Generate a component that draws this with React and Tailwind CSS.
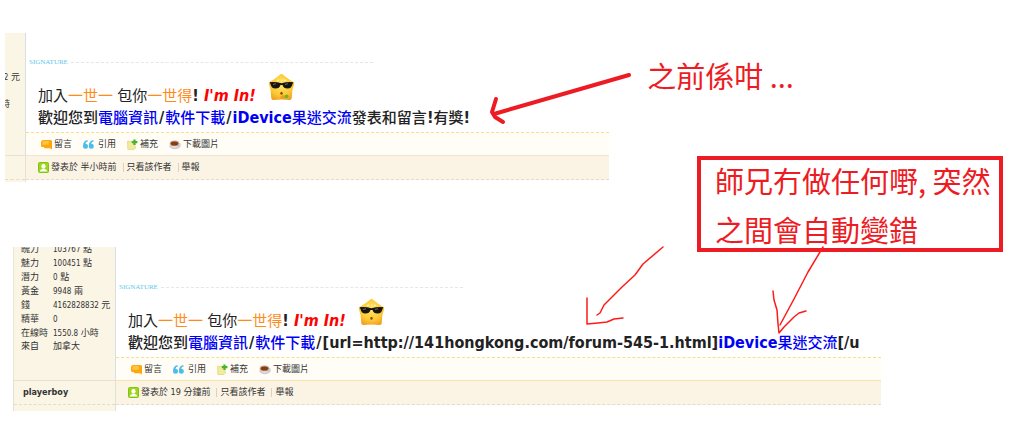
const stats = [
  { label: "魄力", value: "103767", unit: "點" },
  { label: "魅力", value: "100451", unit: "點" },
  { label: "潛力", value: "0", unit: "點" },
  { label: "黃金", value: "9948", unit: "兩" },
  { label: "錢", value: "4162828832", unit: "元" },
  { label: "精華", value: "0", unit: "" },
  { label: "在線時", value: "1550.8", unit: "小時" },
];

function CommentIcon() {
  return (
    <svg className="w-[11px] h-[11px] mr-0.5" viewBox="0 0 11 11">
      <path d="M2.500 1h7q1.500 0 1.500 1.500v8L9 9.300H4.500Q3 9.300 2.800 8H1.500Q0 8 0 6.500V3.500Q0 1 2.500 1z" fill="#ffa60f" />
      <path d="M2.200 2h5.600v3.800H1.500V3z" fill="#ffc53e" />
    </svg>
  );
}

function QuoteIcon() {
  return (
    <svg className="w-[11px] h-[11px] mr-1" viewBox="0 0 11 11">
      <g fill="#4cbdea">
        <path d="M4.500 1C1.500 1.400 0 3.800 0 7.200a2.500 2.500 0 1 0 2.500-2.500C2.700 3.400 3.300 2.700 4.800 2.400z" />
        <path d="M10.300 1C7.300 1.400 5.800 3.800 5.800 7.200a2.500 2.500 0 1 0 2.500-2.500C8.500 3.400 9.100 2.700 10.600 2.400z" />
      </g>
    </svg>
  );
}

function NoteIcon() {
  return (
    <svg className="w-[11px] h-[11px] mr-0.5" viewBox="0 0 11 11">
      <path d="M.5 2.300h6.500l1.500 6.700-1.500 1.500H.8z" fill="#f3eb9c" stroke="#d6cc78" strokeWidth=".6" />
      <path d="M7.500.5v5.500M4.800 3.200h5.600" stroke="#45b52d" strokeWidth="2.200" />
    </svg>
  );
}

function CoffeeIcon() {
  return (
    <svg className="w-[12px] h-[11px] mr-0.5" viewBox="0 0 12 11">
      <ellipse cx="6" cy="7.300" rx="5.700" ry="2.900" fill="#d3d7e0" />
      <path d="M1 4h9q0 5.200-4.500 5.200T1 4z" fill="#efe9e6" stroke="#b5a79d" strokeWidth=".5" />
      <path d="M9.500 4.500q2.300-.3 2 1.200t-2.700 1.500" fill="none" stroke="#bfc4cf" strokeWidth=".9" />
      <ellipse cx="5.500" cy="4.400" rx="4.600" ry="2.800" fill="#c2a392" />
      <ellipse cx="5.500" cy="4.600" rx="3.700" ry="2" fill="#8a3c12" />
    </svg>
  );
}

function UserIcon() {
  return (
    <svg className="w-[11px] h-[11px] mr-0.5" viewBox="0 0 11 11">
      <rect x=".5" y=".5" width="10" height="10" rx="1" fill="#9bd61c" stroke="#83c20f" />
      <ellipse cx="5.500" cy="4.200" rx="2.100" ry="2.500" fill="#fff" />
      <path d="M1.700 9.500q.3-2.200 2.800-2.600h2q2.500.4 2.800 2.600z" fill="#fff" />
    </svg>
  );
}

function StarFace({ thumb }) {
  return (
    <svg className="w-[27px] h-[28px] shrink-0 mb-1.5" viewBox="0 0 27 28">
      <defs>
        <radialGradient id="gold" cx="50%" cy="40%" r="65%">
          <stop offset="0" stopColor="#ffe56a" />
          <stop offset=".65" stopColor="#fdc833" />
          <stop offset="1" stopColor="#eda024" />
        </radialGradient>
      </defs>
      <path
        d="M13.500 1Q14.500 1 16 2.400L21 6.300 25.300 9Q26.700 10 26 11.500L24.400 17 23.700 25.300Q23.500 27 21.700 26.900L13.500 26.400 5.300 26.900Q3.500 27 3.300 25.300L2.600 17 1 11.500Q.3 10 1.700 9L6 6.300 11 2.400Q12.500 1 13.500 1z"
        fill="url(#gold)"
      />
      <path d="M9 8l2-1.200M13 7.200h1.500M16 6.800l2 1.200" stroke="#fff5b5" strokeWidth="1.300" />
      <path d="M1.500 9.200Q7 8.300 13.500 10.300 20 8.300 25.500 9.200L24.500 11Q23.500 15.700 19.500 15.600 15.500 15.500 14.500 12h-2Q11.500 15.500 7.500 15.600 3.500 15.700 2.500 11z" fill="#171512" />
      <path d="M5 11.500l3-.8M17 11.500l3-.8" stroke="#77736b" strokeWidth=".9" />
      <ellipse cx="13.500" cy="20.300" rx="1.200" ry="1.500" fill="#8e4c0a" />
      {thumb && (
        <>
          <path d="M12 24l3-2.200 2 1.700v2.500h-4z" fill="#ee9f1c" />
          <circle cx="18.500" cy="23.300" r="1.900" fill="#6db52b" />
        </>
      )}
    </svg>
  );
}

function SignatureRule() {
  return (
    <div className="flex items-center h-2 pl-[3px] w-[347px]">
      <span className="font-['Liberation_Serif',serif] text-[7px] leading-2 text-[#62c8e8]">SIGNATURE</span>
      <span className="flex-1 ml-[3px] border-t border-dashed border-[#e6e6e6]" />
    </div>
  );
}

function Signature({ thumb, children }) {
  return (
    <div className="mt-2 pb-1 pl-3 text-[15px] leading-[21px] whitespace-nowrap text-[#222]">
      <div className="flex items-end h-[33px]">
        <p className="mr-3">
          加入<span className="text-[#ff8c1a]">一世一</span> 包你
          <span className="text-[#ff8c1a]">一世得</span>
          <b className="text-base leading-[21px]">! <i className="text-[#f00]">I'm In!</i></b>
        </p>
        <StarFace thumb={thumb} />
      </div>
      <p className="h-[21px] font-medium">
        歡迎您到
        <a href="#pc" className="text-[#0000f5]">電腦資訊</a>
        <b className="mx-px text-base leading-[21px]">/</b>
        <a href="#software" className="text-[#0000f5]">軟件下載</a>
        <b className="mx-px text-base leading-[21px]">/</b>
        {children}
      </p>
    </div>
  );
}

function Toolbar() {
  return (
    <div className="flex items-center gap-[11px] h-[23px] pl-[15px] border-t border-dashed border-[#f5e08c] bg-[#fffdf6]">
      <button className="flex items-center"><CommentIcon />留言</button>
      <button className="flex items-center"><QuoteIcon />引用</button>
      <button className="flex items-center"><NoteIcon />補充</button>
      <button className="flex items-center"><CoffeeIcon />下載圖片</button>
    </div>
  );
}

function PostFooter({ time }) {
  return (
    <div className="flex items-center h-6 pl-3 border-b border-dashed border-[#e3dccb] bg-[#fbf4e5]">
      <UserIcon />
      <span>發表於 {time}</span>
      <a href="#author" className="ml-1.5 pl-[3px] border-l border-[#d8d2c4] leading-[9px]">只看該作者</a>
      <a href="#report" className="ml-1.5 pl-[3px] border-l border-[#d8d2c4] leading-[9px]">舉報</a>
    </div>
  );
}

function Arrows() {
  return (
    <svg className="absolute left-0 top-0 z-20 w-[1024px] h-[447px] pointer-events-none" viewBox="0 0 1024 447" fill="none" strokeLinecap="round" strokeLinejoin="round">
      <g stroke="#ed1c24" strokeWidth="4">
        <path d="M629 75L494 114" />
        <path d="M496 99L492 112 495 117 503 122" />
      </g>
      <g stroke="#ff1a1a" strokeWidth="1.500">
        <path d="M663 247L643 264 635 275 622 287 604 305 600 313 597 315" />
        <path d="M587 298V324L598 323 607 322 614 319 623 318" />
        <path d="M823 247L808 272 794 299 780 325" />
        <path d="M773 291L774 300 777 310 778 324 779 333 784 327 794 317 799 313 806 311" />
      </g>
    </svg>
  );
}

export default function App() {
  return (
    <main className="relative min-h-screen overflow-hidden bg-white pt-[33px] font-['DejaVu_Sans_Condensed','Noto_Sans_CJK_TC',sans-serif] text-[9px] leading-[13px] text-[#333]">
      <div className="flex items-start">
        <article className="grid grid-cols-[21px_1fr] w-[59%] ml-[5px]">
          <aside className="flex flex-col items-end overflow-hidden whitespace-nowrap pt-[38px] pr-[5px] bg-[#fbf5e6] border-r border-[#d5dfe4]">
            <p><span className="text-[8px]">32</span> 元</p>
            <p className="mt-[14px] mr-2.5">小時</p>
          </aside>
          <div className="pt-[25px]">
            <SignatureRule />
            <Signature thumb>
              <a href="#idevice" className="text-[#0000f5]"><b className="text-base leading-[21px]">iDevice</b>果迷交流</a>
              發表和留言<b className="text-base leading-[21px]">!</b>有獎<b className="text-base leading-[21px]">!</b>
            </Signature>
            <Toolbar />
          </div>
          <div className="bg-[#fbf5e6] border-t border-r border-[#e3e1d8] h-[27px]">
            <div className="h-6 border-b border-dashed border-[#e3dccb]" />
          </div>
          <div className="border-t border-[#f0e6cf]">
            <PostFooter time="半小時前" />
          </div>
        </article>

        <aside className="relative z-10 flex-1 flex flex-col font-['Noto_Sans_CJK_TC',sans-serif] text-[29px] whitespace-nowrap text-[#ed1c24]">
          <p className="pl-[38px] pt-[18px] leading-12">之前係咁 ...</p>
          <div className="flex items-center self-end w-[306px] h-24 mt-[57px] mr-[21px] pt-0.5 pl-[14px] border-4 border-[#ed1c24] leading-[49px]">
            <p>師兄冇做任何嘢, 突然<br />之間會自動變錯</p>
          </div>
        </aside>
      </div>

      <article className="grid grid-cols-[103px_1fr] -mt-[5px] ml-[13px] mr-[14%]">
        <aside className="h-[133px] overflow-hidden pl-[7px] bg-[#fbf5e6] border-l border-r border-l-[#ebe5d6] border-r-[#d5dfe4]">
          <table className="-mt-[5px] whitespace-nowrap">
            <tbody>
              {stats.map((s) => (
                <tr key={s.label} className="h-[13px]">
                  <th className="w-8 p-0 text-left font-normal">{s.label}</th>
                  <td className="p-0 h-[14px]"><span className="text-[8px]">{s.value}</span> {s.unit}</td>
                </tr>
              ))}
              <tr>
                <th className="p-0 text-left font-normal">來自</th>
                <td className="p-0">加拿大</td>
              </tr>
            </tbody>
          </table>
        </aside>
        <div className="pt-9">
          <SignatureRule />
          <Signature>
            <b className="text-base leading-[21px]">[url=http://141hongkong.com/forum-545-1.html]</b>
            <a href="#idevice" className="text-[#0000f5]"><b className="text-base leading-[21px]">iDevice</b>果迷交流</a>
            <b className="text-base leading-[21px]">[/u</b>
          </Signature>
          <Toolbar />
        </div>
        <div className="h-[31px] bg-[#fbf5e6] border-t border-l border-r border-[#e3e1d8]">
          <div className="flex items-center h-6 pl-[9px] border-b border-dashed border-[#e3dccb]">
            <b>playerboy</b>
          </div>
        </div>
        <div className="border-t border-[#f5e5a8]">
          <PostFooter time="19 分鐘前" />
        </div>
      </article>

      <Arrows />
    </main>
  );
}
